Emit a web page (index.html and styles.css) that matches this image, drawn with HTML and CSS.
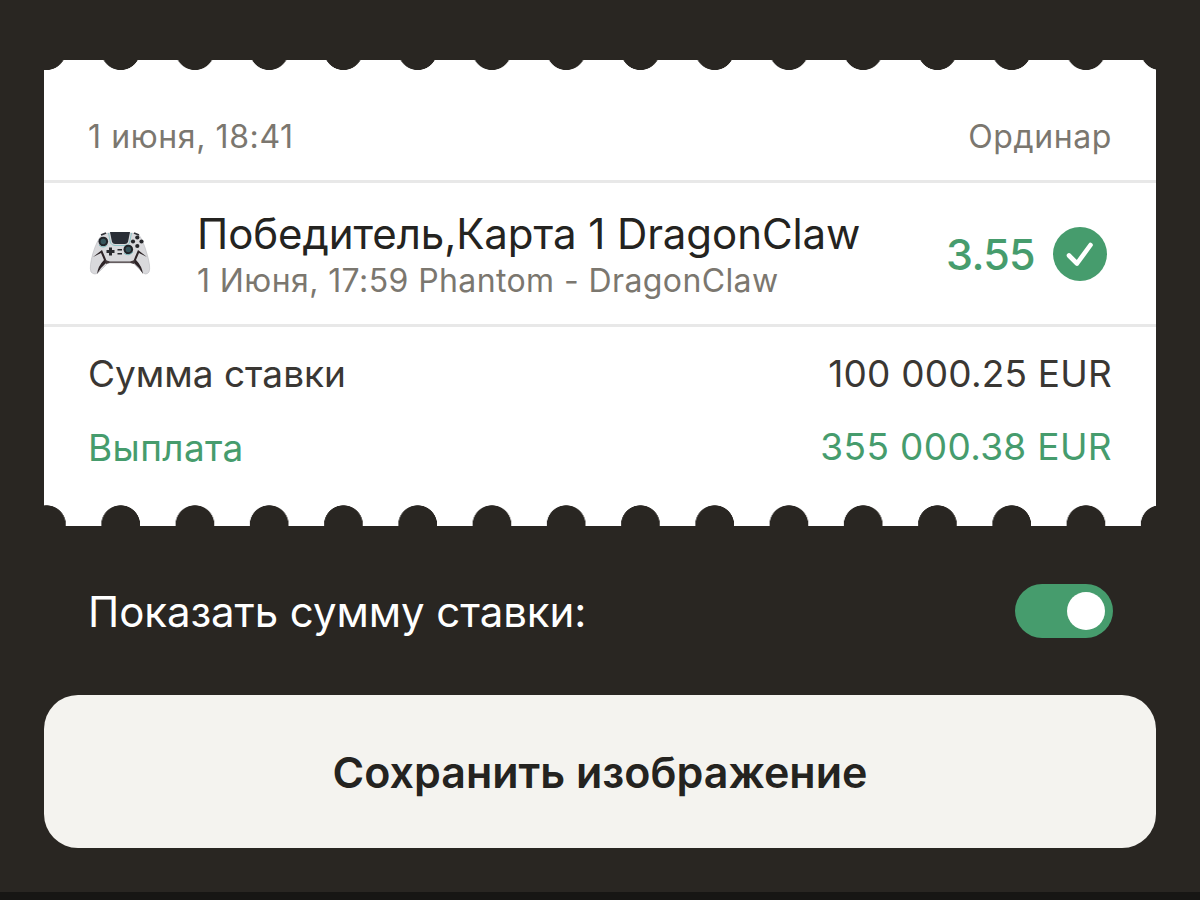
FILE: index.html
```
<!DOCTYPE html>
<html lang="ru">
<head>
    <meta charset="UTF-8">
    <title>Купон</title>
    <meta name="viewport" content="width=device-width, initial-scale=1.0">
    <link rel="stylesheet" href="styles.css">
</head>
<body>
    <div class="ticket">
        <div class="edge edge-top"></div>
        <div class="ticket-head">
            <span class="date">1 июня, 18:41</span>
            <span class="type">Ординар</span>
        </div>
        <div class="event">
            <svg class="gamepad" viewBox="0 0 64 46" width="64" height="46">
                <!-- body -->
                <path d="M14 4 Q17 2 22 2 L42 2 Q47 2 51 4 Q55 9 59 23 Q63 36 61 41 Q58 45 54 41 L47 34 Q46 32 43 32 L22 32 Q19 32 18 34 L11 41 Q7 45 3 41 Q1 36 5 22 Q9 9 14 4 Z" fill="#d9d9dc" stroke="#b9b9bd" stroke-width="0.600"/>
                <!-- grips -->
                <path d="M5 26 L14 19 L17 26 L19 31 Q13 36 9 43 Q10 35 16 29 L13 22 Z M59 26 L50 19 L47 26 L45 31 Q51 36 55 43 Q54 35 48 29 L51 22 Z" fill="#2d2427"/>
                <path d="M17 29 L22 30.500 H42 L47 29 L46 33 L42 31.800 H22 L18 33 Z" fill="#43383a"/>
                <!-- touchpad -->
                <path d="M22 1 L42 1 L40 11 Q39 13 37 13 L27 13 Q25 13 24 11 Z" fill="#292d35"/>
                <path d="M20.500 2 L22.500 12 Q24 14.500 27 14.500 L37 14.500 Q40 14.500 41.500 12 L43.500 2" fill="none" stroke="#8fc3c7" stroke-width="1"/>
                <path d="M13 4 L18 2 M46 2 L51 4" stroke="#33343a" stroke-width="1.800"/>
                <!-- sticks -->
                <circle cx="15.300" cy="10.500" r="4.800" fill="#202328"/>
                <circle cx="15.300" cy="10.500" r="2.700" fill="#35545b"/>
                <circle cx="40.300" cy="18.500" r="4.800" fill="#202328"/>
                <circle cx="40.300" cy="18.500" r="2.700" fill="#35545b"/>
                <path d="M11 14 Q15 18 19.500 14 M36 22 Q40 26 45 21" fill="none" stroke="#79b8bc" stroke-width="1"/>
                <path d="M21 16.500 h3 v2.500 h2.500 v3 h-2.500 v2.500 h-3 v-2.500 h-2.500 v-3 h2.500 z" fill="#292a2e"/>
                <g fill="#25262a">
                    <circle cx="49.300" cy="6.500" r="2.100"/>
                    <circle cx="45" cy="10.500" r="2.100"/>
                    <circle cx="53.500" cy="10.500" r="2.100"/>
                    <circle cx="49.300" cy="15" r="2.100"/>
                    <rect x="29.500" y="18" width="4.500" height="1.500"/>
                    <rect x="29.500" y="22" width="4.500" height="1.500"/>
                </g>
            </svg>
            <div class="event-text">
                <div class="event-title">Победитель,Карта 1 DragonClaw</div>
                <div class="event-sub">1 Июня, 17:59 Phantom - DragonClaw</div>
            </div>
            <span class="odds">3.55</span>
            <svg class="check" viewBox="0 0 54 54" width="54" height="54">
                <circle cx="27" cy="27" r="27" fill="#469c6d"/>
                <path d="M16 28.500 L24 36.500 L37.500 18" fill="none" stroke="#fff" stroke-width="4.600" stroke-linecap="round" stroke-linejoin="round"/>
            </svg>
        </div>
        <div class="sums">
            <div class="sum-row">
                <span class="stake-label">Сумма ставки</span>
                <span class="stake">100 000.25 EUR</span>
            </div>
            <div class="sum-row payout">
                <span class="payout-label">Выплата</span>
                <span class="payout-sum">355 000.38 EUR</span>
            </div>
        </div>
        <div class="edge edge-bottom"></div>
    </div>
    <div class="toggle-row">
        <span class="toggle-label">Показать сумму ставки:</span>
        <div class="toggle"><div class="knob"></div></div>
    </div>
    <button class="save"><span>Сохранить изображение</span></button>
    <div class="bottom-bar"></div>
</body>
</html>
```
FILE: styles.css
```
* {
    box-sizing: border-box;
}
body {
    background: #292622;
    font-family: Inter, 'Liberation Sans', sans-serif;
    margin: 0;
    height: 900px;
    padding: 60px 44px 0;
    display: flex;
    flex-direction: column;
    overflow: hidden;
    white-space: nowrap;
}
.ticket {
    height: 466px;
    flex: none;
    background: #fff;
    color: #7b776f;
    display: flex;
    flex-direction: column;
}
.edge {
    flex: none;
    background-size: 74.25px 100%;
    background-position: -34.7px 0;
}
.edge-top {
    height: 11px;
    background-image: radial-gradient(circle at 50% -9.5px, #292622 19.2px, transparent 19.8px);
}
.edge-bottom {
    height: 21px;
    background-image: radial-gradient(circle at 50% 19.7px, #292622 19.1px, transparent 19.7px);
}
.ticket-head {
    height: 112px;
    padding: 22px 44px 0;
    display: flex;
    justify-content: space-between;
    align-items: center;
    font-size: 32px;
    border-bottom: 3px solid #e8e8e8;
}
.date {
    letter-spacing: 0.6px;
}
.type {
    letter-spacing: 0.6px;
}
.event {
    height: 144px;
    padding: 0 49px 0 44px;
    display: flex;
    align-items: center;
    border-bottom: 3px solid #e8e8e8;
}
.event-text {
    flex: 1;
    margin-left: 45px;
    padding-top: 3px;
}
.event-title {
    font-size: 42px;
    line-height: 52px;
    letter-spacing: -0.08px;
    color: #242320;
}
.event-sub {
    font-size: 32px;
    line-height: 42px;
    letter-spacing: 0.4px;
}
.odds {
    font-size: 43px;
    font-weight: 500;
    letter-spacing: -0.7px;
    color: #469c6d;
    margin-right: 18px;
}
.sums {
    flex: 1;
    padding: 10px 44px 0;
    font-size: 37px;
    color: #3a3733;
}
.sum-row {
    height: 73px;
    display: flex;
    justify-content: space-between;
    align-items: center;
}
.stake {
    letter-spacing: 0.2px;
}
.payout {
    color: #469c6d;
    letter-spacing: 0.35px;
}
.payout-label {
    padding-top: 2px;
}
.toggle-row {
    height: 54px;
    margin-top: 58px;
    padding: 0 43px 0 44px;
    display: flex;
    justify-content: space-between;
    align-items: center;
    color: #fff;
    font-size: 42px;
    letter-spacing: -0.08px;
    flex: none;
}
.toggle {
    width: 98px;
    height: 54px;
    border-radius: 27px;
    background: #469c6d;
    display: flex;
    justify-content: flex-end;
    align-items: center;
    padding-right: 8px;
}
.knob {
    width: 38px;
    height: 38px;
    border-radius: 50%;
    background: #fff;
}
.save {
    height: 153px;
    flex: none;
    margin-top: 57px;
    border: none;
    border-radius: 34px;
    background: #f4f3ef;
    color: #242320;
    font-family: inherit;
    font-size: 43px;
    font-weight: 600;
}
.bottom-bar {
    height: 8px;
    margin: auto -44px 0;
    background: #171614;
}
```
